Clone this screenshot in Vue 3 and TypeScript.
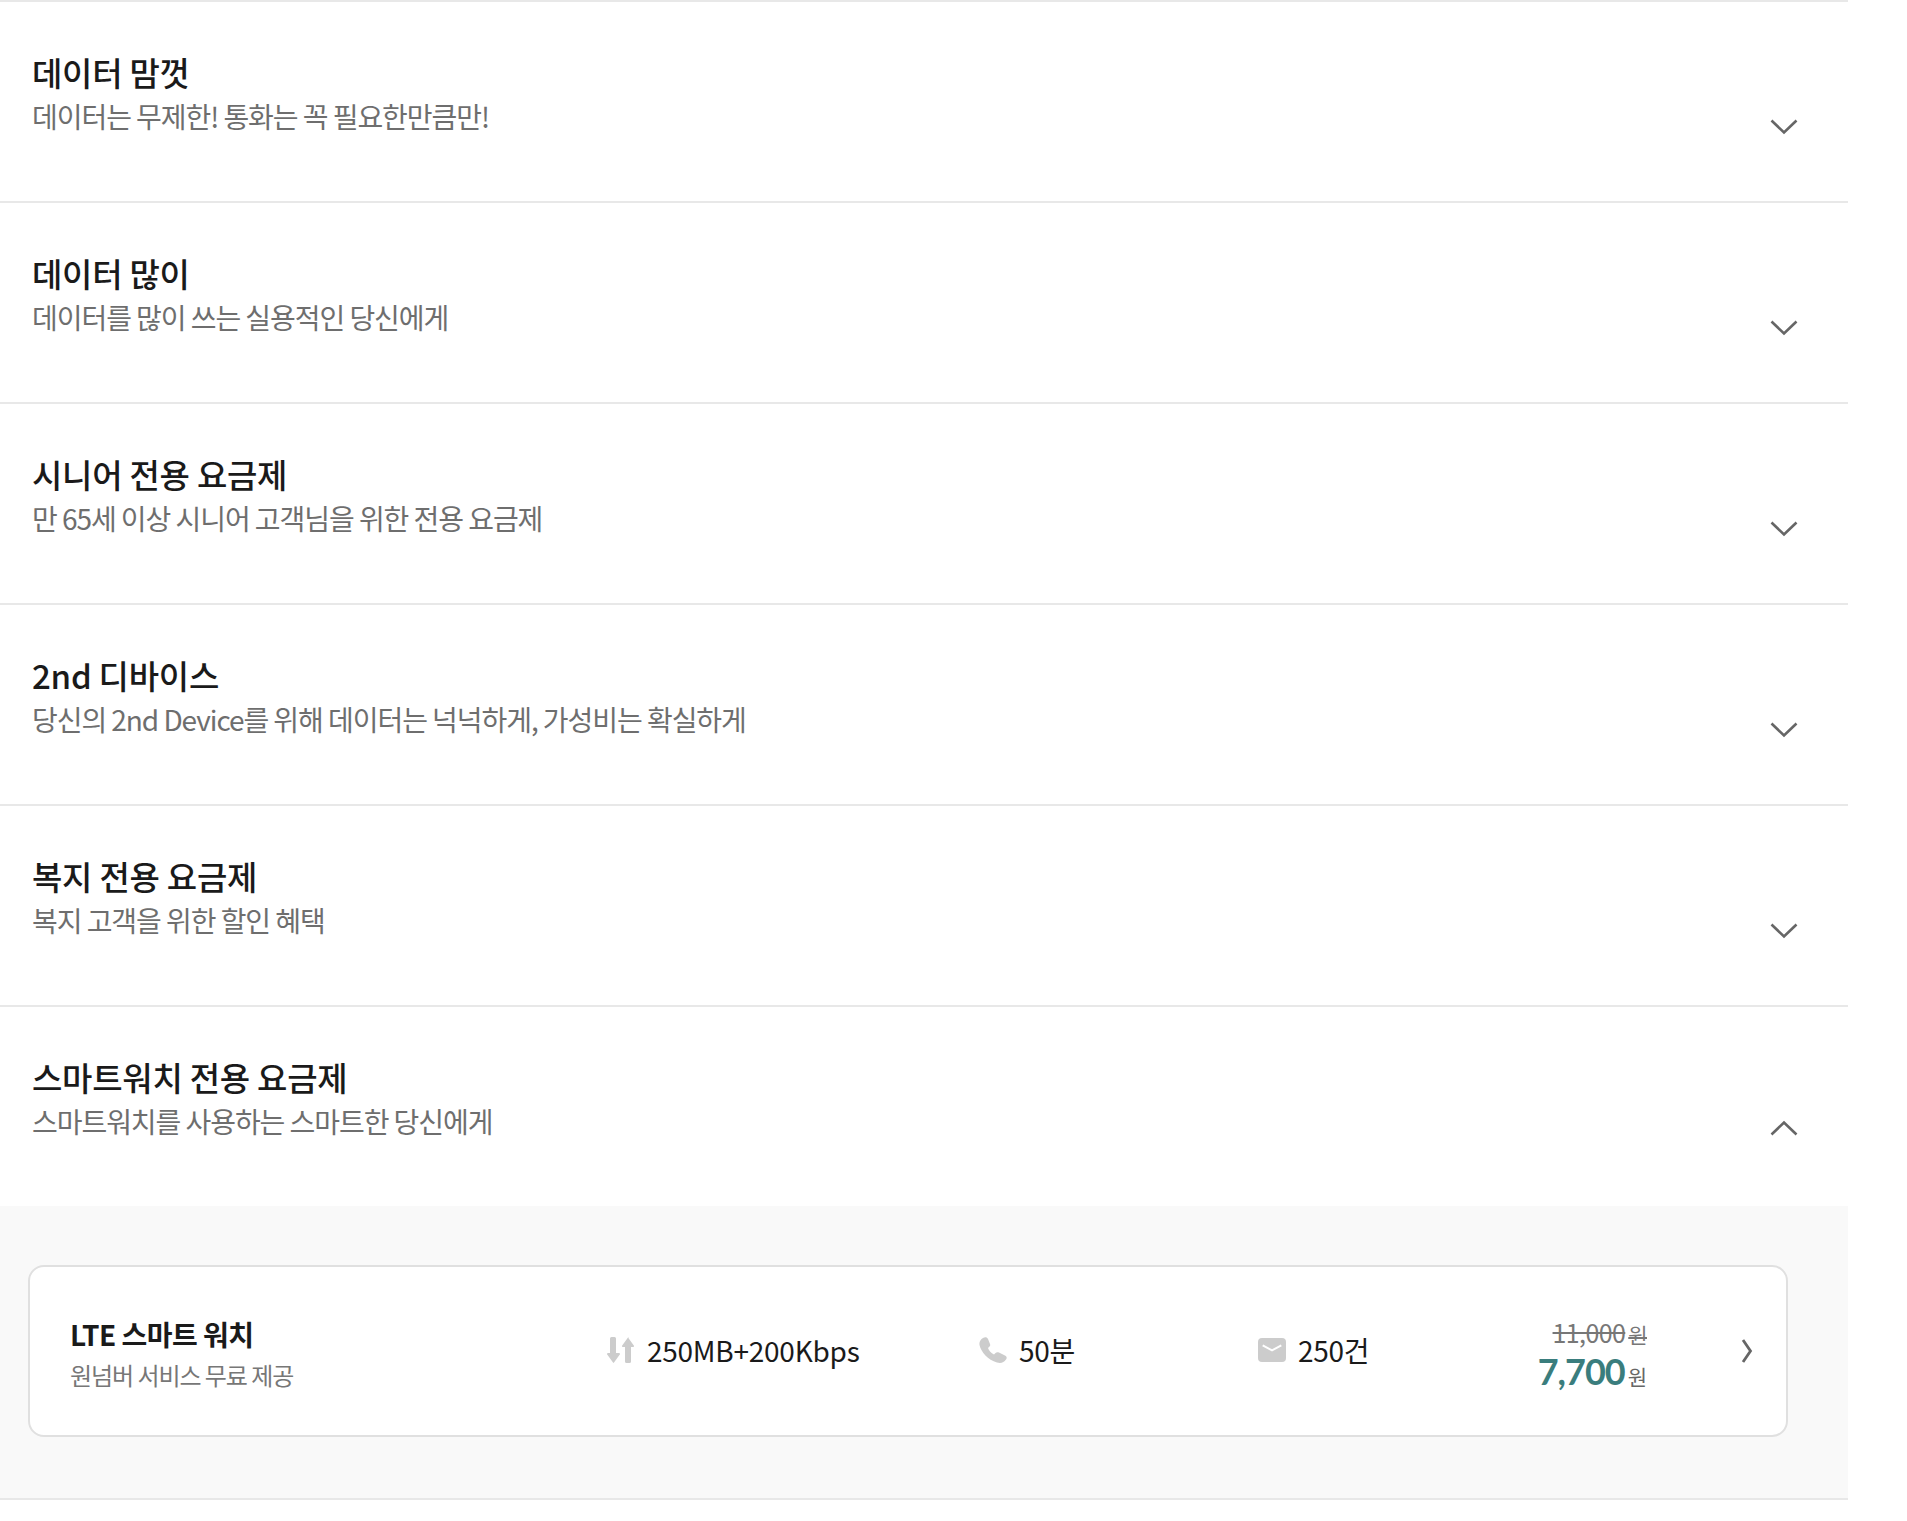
<template>
  <div class="plan-list">
    <section v-for="group in groups" :key="group.title" class="group">
      <div class="group-head">
        <div class="group-text">
          <h3 class="group-title">{{ group.title }}</h3>
          <p class="group-desc">{{ group.desc }}</p>
        </div>
        <svg class="chevron" :class="{ open: group.open }" width="30" height="18" viewBox="0 0 30 18">
          <path d="M2.5 2.5 L15 14.5 L27.5 2.5" fill="none" stroke="#666" stroke-width="2.6" />
        </svg>
      </div>
      <div v-if="group.open" class="group-body">
        <div class="card">
          <div class="plan-name">
            <strong>LTE 스마트 워치</strong>
            <span>원넘버 서비스 무료 제공</span>
          </div>
          <div class="spec">
            <svg width="28" height="26" viewBox="0 0 28 26">
              <path d="M4.500 0h3A1.500 1.500 0 0 1 9 1.500V16h3a1 1 0 0 1 .8 1.600l-5.800 8a.6.6 0 0 1-1 0l-5.800-8A1 1 0 0 1 1 16h2V1.500A1.500 1.500 0 0 1 4.500 0z" fill="#ccc" />
              <path d="M21 .4l5.800 8A1 1 0 0 1 26 10h-2v14.500a1.500 1.500 0 0 1-1.500 1.500h-3a1.500 1.500 0 0 1-1.500-1.500V10h-2a1 1 0 0 1-.8-1.600l5.800-8a.6.6 0 0 1 1 0z" fill="#ccc" />
            </svg>
            <span>250MB+200Kbps</span>
          </div>
          <div class="spec">
            <svg width="28" height="26" viewBox="0 0 28 26">
              <path d="M4 1C6 0 8 0 9 2l2 5c.5 1.500 0 2.500-1 3l-1 1c1 3 3 5 6 6.500l1.500-1.500c1-1 2-1 3.500-.5l6 3c2 1 2 2.500 1 4-2 3-5 4-9 3C9 23 2 15 .5 8 0 5 1.500 2.500 4 1z" fill="#ccc" />
            </svg>
            <span>50분</span>
          </div>
          <div class="spec">
            <svg width="28" height="24" viewBox="0 0 28 24">
              <rect width="28" height="24" rx="4" fill="#ccc" />
              <path d="M4.700 7.300 L14 12.300 L23.300 7.300" fill="none" stroke="#fff" stroke-width="2" />
            </svg>
            <span>250건</span>
          </div>
          <div class="price">
            <div class="price-old"><s>11,000<small>원</small></s></div>
            <div class="price-new"><b>7,700</b><small>원</small></div>
          </div>
          <svg class="go" width="12" height="26" viewBox="0 0 12 26">
            <path d="M2 2 L9.500 13 L2 24" fill="none" stroke="#666" stroke-width="2.800" />
          </svg>
        </div>
      </div>
    </section>
  </div>
</template>

<script setup lang="ts">
interface PlanGroup {
  title: string
  desc: string
  open?: boolean
}

const groups: PlanGroup[] = [
  { title: '데이터 맘껏', desc: '데이터는 무제한! 통화는 꼭 필요한만큼만!' },
  { title: '데이터 많이', desc: '데이터를 많이 쓰는 실용적인 당신에게' },
  { title: '시니어 전용 요금제', desc: '만 65세 이상 시니어 고객님을 위한 전용 요금제' },
  { title: '2nd 디바이스', desc: '당신의 2nd Device를 위해 데이터는 넉넉하게, 가성비는 확실하게' },
  { title: '복지 전용 요금제', desc: '복지 고객을 위한 할인 혜택' },
  { title: '스마트워치 전용 요금제', desc: '스마트워치를 사용하는 스마트한 당신에게', open: true },
]
</script>

<style scoped>
.plan-list {
  width: 1848px;
  font-family: "Noto Sans CJK KR", "Noto Sans", sans-serif;
  color: #1a1a1a;
}

.group {
  border-top: 2px solid #e8e8e8;
}

.group:last-child {
  border-bottom: 2px solid #e8e8e8;
}

.group-head {
  height: 199px;
  box-sizing: border-box;
  padding: 47px 49px 0 32px;
  display: flex;
  justify-content: space-between;
  align-items: flex-start;
}

.group-title {
  margin: 0;
  font-size: 33px;
  line-height: 46px;
  font-weight: 500;
  letter-spacing: -0.25px;
}

.group-desc {
  margin: 0;
  font-size: 28px;
  line-height: 43px;
  font-weight: 400;
  letter-spacing: -1.05px;
  color: #6e6e6e;
}

.chevron {
  margin-top: 69px;
}

.chevron.open {
  margin-top: 65px;
  transform: rotate(180deg);
}

.group-body {
  background: #f9f9f9;
  padding: 59px 60px 61px 28px;
}

.card {
  height: 172px;
  box-sizing: border-box;
  border: 2px solid #e0e0e0;
  border-radius: 16px;
  background: #fff;
  display: grid;
  grid-template-columns: 537px 372px 279px 270px 1fr auto;
  align-items: center;
  padding: 0 33px 0 40px;
}

.plan-name {
  display: flex;
  flex-direction: column;
  margin-top: 5px;
}

.plan-name strong {
  font-size: 28px;
  line-height: 42px;
  font-weight: 700;
  letter-spacing: -0.5px;
}

.plan-name span {
  font-size: 24px;
  line-height: 40px;
  font-weight: 400;
  letter-spacing: -1.05px;
  color: #777;
}

.spec {
  display: flex;
  align-items: center;
  gap: 12px;
  font-size: 28px;
  line-height: 40px;
  letter-spacing: -0.25px;
  padding-bottom: 2px;
}

.price {
  text-align: right;
  margin-right: 94px;
  margin-top: 8px;
}

.price small {
  font-size: 21px;
  margin-left: 3px;
}

.price-old {
  font-size: 25px;
  line-height: 36px;
  letter-spacing: -0.6px;
  color: #777;
}

.price-new {
  line-height: 38px;
  color: #666;
}

.price-new b {
  font-family: Lato, "Noto Sans CJK KR", sans-serif;
  font-size: 36px;
  font-weight: 700;
  letter-spacing: -1px;
  color: #3a7d7d;
}
</style>
